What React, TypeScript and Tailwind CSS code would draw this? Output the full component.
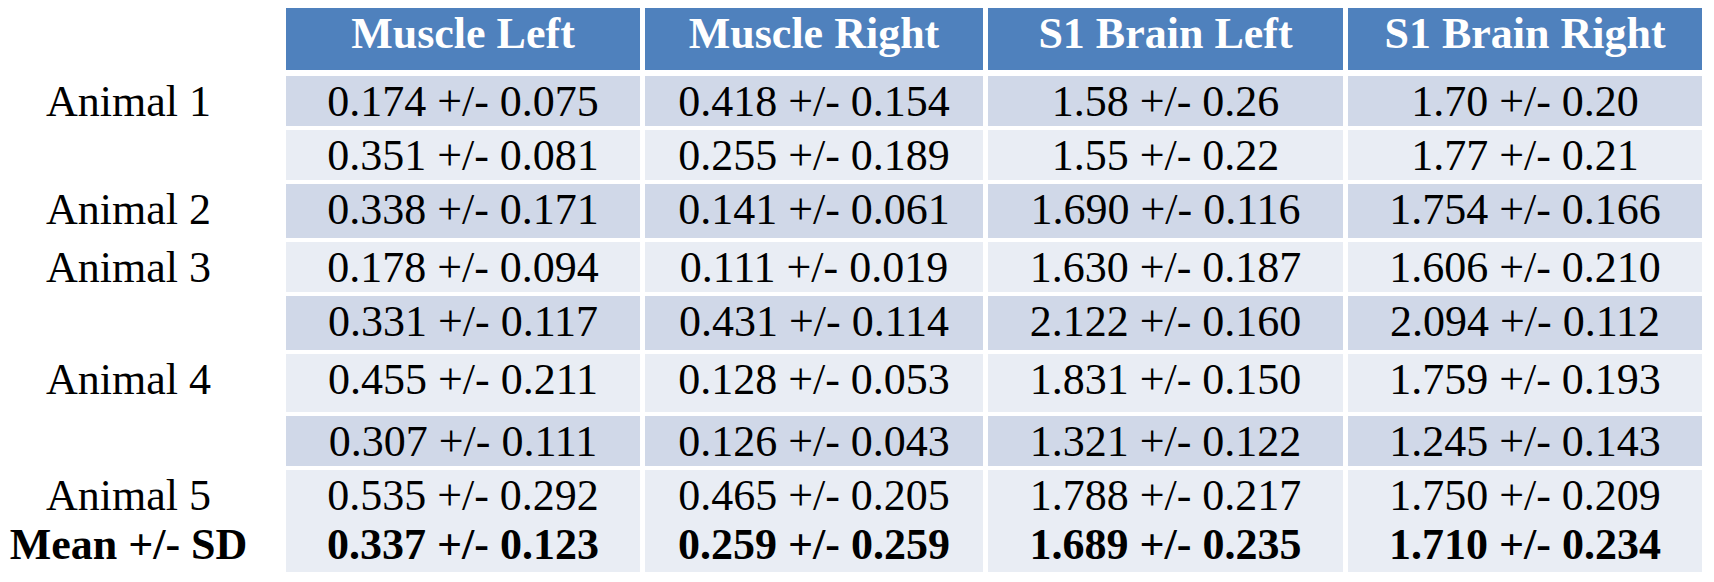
const headers = ["Muscle Left", "Muscle Right", "S1 Brain Left", "S1 Brain Right"];

interface Row {
  label: string;
  values: string[];
  height: string;
  tone: "dark" | "light";
  // the last row carries the summary line under it
  mean?: { label: string; values: string[] };
}

const rows: Row[] = [
  { label: "Animal 1", height: "h-[50px]", tone: "dark", values: ["0.174 +/- 0.075", "0.418 +/- 0.154", "1.58 +/- 0.26", "1.70 +/- 0.20"] },
  { label: "", height: "h-[50px]", tone: "light", values: ["0.351 +/- 0.081", "0.255 +/- 0.189", "1.55 +/- 0.22", "1.77 +/- 0.21"] },
  { label: "Animal 2", height: "h-[54px]", tone: "dark", values: ["0.338 +/- 0.171", "0.141 +/- 0.061", "1.690 +/- 0.116", "1.754 +/- 0.166"] },
  { label: "Animal 3", height: "h-[50px]", tone: "light", values: ["0.178 +/- 0.094", "0.111 +/- 0.019", "1.630 +/- 0.187", "1.606 +/- 0.210"] },
  { label: "", height: "h-[54px]", tone: "dark", values: ["0.331 +/- 0.117", "0.431 +/- 0.114", "2.122 +/- 0.160", "2.094 +/- 0.112"] },
  { label: "Animal 4", height: "h-[58px]", tone: "light", values: ["0.455 +/- 0.211", "0.128 +/- 0.053", "1.831 +/- 0.150", "1.759 +/- 0.193"] },
  { label: "", height: "h-[50px]", tone: "dark", values: ["0.307 +/- 0.111", "0.126 +/- 0.043", "1.321 +/- 0.122", "1.245 +/- 0.143"] },
  {
    label: "Animal 5",
    height: "h-[102px]",
    tone: "light",
    values: ["0.535 +/- 0.292", "0.465 +/- 0.205", "1.788 +/- 0.217", "1.750 +/- 0.209"],
    mean: { label: "Mean +/- SD", values: ["0.337 +/- 0.123", "0.259 +/- 0.259", "1.689 +/- 0.235", "1.710 +/- 0.234"] },
  },
];

const grid = "grid grid-cols-[281px_354px_338px_355px_354px] gap-x-[5px]";

export default function App() {
  return (
    <div className="w-[1714px] h-[582px] bg-white pt-2 text-[44px] text-black font-['Liberation_Serif','Times_New_Roman',serif]">
      <div className="flex flex-col gap-[4px]">
        {/* header */}
        <div className={`${grid} h-[62px] mb-[2px]`}>
          <div />
          {headers.map((h) => (
            <div key={h} className="bg-[#4f81bd] text-white font-bold text-center leading-[49px] pt-px whitespace-nowrap">
              {h}
            </div>
          ))}
        </div>

        {rows.map((row, i) => (
          <div key={i} className={`${grid} ${row.height}`}>
            <div className="pr-[24px] text-center leading-[49px] pt-px whitespace-nowrap">
              <div>{row.label}</div>
              {row.mean && <div className="font-bold">{row.mean.label}</div>}
            </div>
            {row.values.map((v, j) => (
              <div
                key={j}
                className={`text-center leading-[49px] pt-px whitespace-nowrap ${row.tone === "dark" ? "bg-[#d0d8e8]" : "bg-[#e9edf4]"}`}
              >
                <div>{v}</div>
                {row.mean && <div className="font-bold">{row.mean.values[j]}</div>}
              </div>
            ))}
          </div>
        ))}
      </div>
    </div>
  );
}
